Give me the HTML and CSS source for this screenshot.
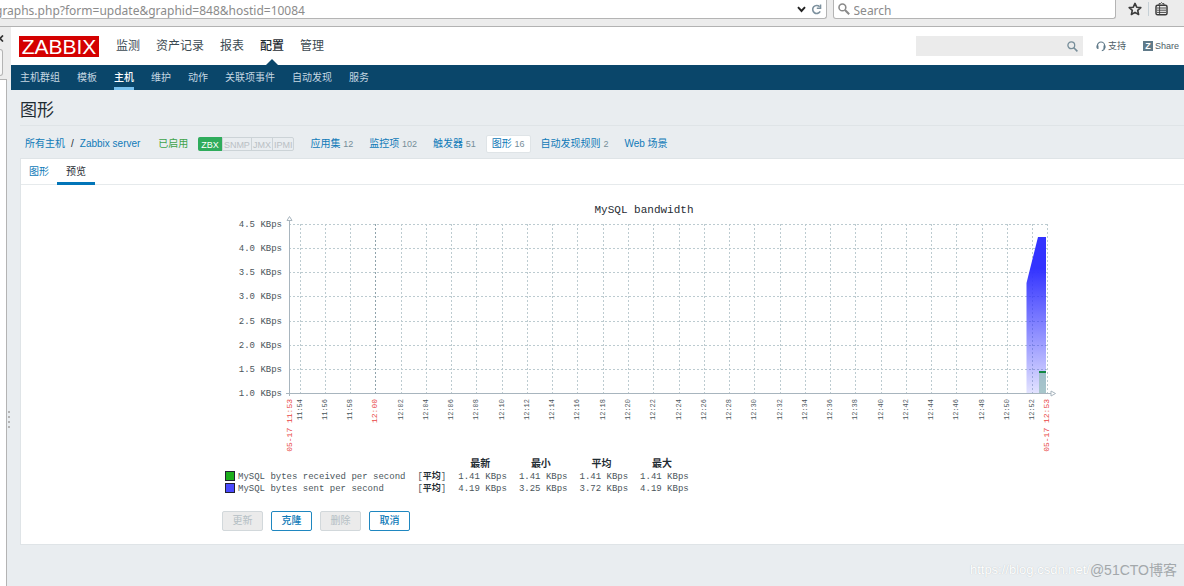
FILE: index.html
```html
<!DOCTYPE html>
<html lang="zh-CN">
<head>
<meta charset="utf-8">
<title>图形</title>
<link rel="stylesheet" href="styles.css">
</head>
<body>
<div class="toolbar">
  <div class="address">
    <span class="address-text">graphs.php?form=update&amp;graphid=848&amp;hostid=10084</span>
    <svg class="icon-chevron" width="9" height="7" viewBox="0 0 9 7"><path d="M1 1.2 4.5 5 8 1.2" fill="none" stroke="#222" stroke-width="1.9"/></svg>
    <svg width="11" height="11" viewBox="0 0 11 11"><path d="M8.6 2.7A4 4 0 1 0 9.2 7.4" fill="none" stroke="#7d919e" stroke-width="1.6"/><path d="M10.3.4V5H5.8V3.6h3V.4z" fill="#7d919e"/></svg>
  </div>
  <label class="browser-search">
    <svg width="12" height="12" viewBox="0 0 12 12"><circle cx="4.4" cy="4.4" r="3.4" fill="none" stroke="#8a8a8a" stroke-width="1.6"/><path d="m7 7 4.2 4.2" stroke="#8a8a8a" stroke-width="2"/></svg>
    <input type="text" placeholder="Search" aria-label="Search">
  </label>
  <div class="toolbar-icons">
    <svg width="14" height="14" viewBox="0 0 14 14"><path d="m7 1.4 1.7 3.8 4.1.4-3.1 2.8.9 4.1L7 10.4l-3.6 2.1.9-4.1-3.1-2.8 4.1-.4z" fill="none" stroke="#3b3b3b" stroke-width="1.6" stroke-linejoin="round"/></svg>
    <span class="divider"></span>
    <svg width="13" height="14" viewBox="0 0 13 14"><rect x="1" y="3.2" width="11" height="9.600" rx="1.6" fill="none" stroke="#3b3b3b" stroke-width="1.5"/><path d="M4 3V1.600h1.500L6.500.5l1 1.100H9V3M2 6h9M2 8.200h9M2 10.400h9M4.600 4v8" fill="none" stroke="#3b3b3b" stroke-width=".9"/></svg>
  </div>
</div>

<div class="shell">
  <aside class="rail">
    <svg class="rail-close" width="4" height="7" viewBox="0 0 4 7"><path d="M-3 .5 3 6.5M3 .5-3 6.5" stroke="#333" stroke-width="1.7"/></svg>
    <div class="rail-box"></div>
    <div class="rail-list"></div>
    <div class="rail-grip"></div>
  </aside>

  <div class="app">
    <header class="top">
      <a class="logo" href="#">ZABBIX</a>
      <nav class="menu">
        <a href="#">监测</a><a href="#">资产记录</a><a href="#">报表</a><a class="current" href="#">配置</a><a href="#">管理</a>
      </nav>
      <div class="search">
        <input type="text" aria-label="搜索">
        <svg width="11" height="11" viewBox="0 0 11 11"><circle cx="4.3" cy="4.3" r="3.4" fill="none" stroke="#768d99" stroke-width="1.3"/><path d="m6.8 6.8 3.6 3.6" stroke="#768d99" stroke-width="1.6"/></svg>
      </div>
      <a class="tool support" href="#">
        <svg width="10" height="11" viewBox="0 0 10 11"><path d="M1.4 6.5V4.6a3.6 3.6 0 0 1 7.2 0v1.9c0 2-1.2 3-2.8 3.2" fill="none" stroke="#607a89" stroke-width="1.1"/><path d="M.5 4.5h2V8h-1l-1-1zM9.500 4.500h-2V8h1l1-1z" fill="#607a89"/></svg>支持</a>
      <a class="tool share" href="#"><span class="share-mark">Z</span>Share</a>
    </header>

    <nav class="submenu">
      <a href="#">主机群组</a><a href="#">模板</a><a class="current" href="#">主机</a><a href="#">维护</a><a href="#">动作</a><a href="#">关联项事件</a><a href="#">自动发现</a><a href="#">服务</a>
    </nav>

    <main class="content">
      <h1>图形</h1>
      <div class="crumbs">
        <a href="#">所有主机</a><span class="slash">/</span><a href="#">Zabbix server</a>
        <span class="enabled">已启用</span>
        <span class="badges"><span class="on">ZBX</span><span>SNMP</span><span>JMX</span><span>IPMI</span></span>
        <nav class="objects">
          <a href="#">应用集 <sup>12</sup></a><a href="#">监控项 <sup>102</sup></a><a href="#">触发器 <sup>51</sup></a><a class="current" href="#">图形 <sup>16</sup></a><a href="#">自动发现规则 <sup>2</sup></a><a href="#">Web 场景</a>
        </nav>
      </div>

      <section class="panel">
        <div class="tabs"><a href="#">图形</a><a class="current" href="#">预览</a></div>
        <form class="preview">
          <svg class="chart" id="chart" viewBox="0 0 840 262" role="img" aria-label="MySQL bandwidth">
            <defs>
              <linearGradient id="sent" x1="0" y1="42" x2="0" y2="198" gradientUnits="userSpaceOnUse">
                <stop offset="0" stop-color="#3333ff"/><stop offset=".2" stop-color="#3333ff"/><stop offset="1" stop-color="#3333ff" stop-opacity=".14"/>
              </linearGradient>
            </defs>
            <text class="chart-title" x="422" y="18">MySQL bandwidth</text>
            <g id="grid"></g>
            <path d="M804.500 88 816 42h8v156h-19.500z" fill="url(#sent)"/>
            <path d="M817 177h7v21h-7z" fill="#8fbbb5" fill-opacity=".7"/>
            <path d="M817 176h7v2h-7z" fill="#118844"/>
            <path class="axis" d="M67.500 26v175M64 198.500h765"/>
            <path class="arrow" d="m67.500 21.500 2.500 4h-5zM829 196l4.500 2.500-4.500 2.500z"/>
            <g id="labels"></g>
          </svg>
          <table class="legend">
            <thead><tr><th></th><th></th><th>最新</th><th>最小</th><th>平均</th><th>最大</th></tr></thead>
            <tbody>
              <tr><td><span class="swatch received"></span>MySQL bytes received per second</td><td>[<b>平均</b>]</td><td>1.41 KBps</td><td>1.41 KBps</td><td>1.41 KBps</td><td>1.41 KBps</td></tr>
              <tr><td><span class="swatch sent"></span>MySQL bytes sent per second</td><td>[<b>平均</b>]</td><td>4.19 KBps</td><td>3.25 KBps</td><td>3.72 KBps</td><td>4.19 KBps</td></tr>
            </tbody>
          </table>
          <div class="actions">
            <button type="button" disabled>更新</button><button type="button">克隆</button><button type="button" disabled>删除</button><button type="button">取消</button>
          </div>
        </form>
      </section>
    </main>
  </div>
</div>
<div class="watermark"><span class="site">https://blog.csdn.net/</span><span class="owner">@51CTO博客</span></div>
<script src="chart.js"></script>
</body>
</html>
```
FILE: styles.css
```css
* { box-sizing: border-box; }
body {
  margin: 0;
  min-height: 100vh;
  display: flex;
  flex-direction: column;
  overflow: hidden;
  background: #e9edf0;
  color: #1f2c33;
  font: 10px/14px "Liberation Sans", "Noto Sans CJK SC", sans-serif;
}
a { color: #0f7ab8; text-decoration: none; }
svg { flex: none; }

/* Browser toolbar */
.toolbar {
  display: flex;
  align-items: flex-start;
  gap: 6px;
  height: 27px;
  background: #ececec;
  border-bottom: 1px solid #b2b2b2;
  font: 12px/18px "Noto Sans", sans-serif;
}
.address, .browser-search {
  display: flex;
  align-items: center;
  height: 19px;
  background: #fff;
  border: 1px solid #b4b4b4;
  border-top: 0;
  border-radius: 0 0 3px 3px;
}
.address { flex: 829 1 0; gap: 5px; padding-right: 4px; border-left: 0; }
.address-text { flex: 1; margin-left: -5px; padding-top: 3px; color: #8b8b8b; white-space: nowrap; }
.browser-search { flex: 280 1 0; gap: 4px; padding-left: 4px; }
.browser-search input { flex: 1; min-width: 0; border: 0; padding: 3px 0 0; height: 18px; background: none; font: inherit; }
.browser-search input::placeholder { color: #8b8b8b; opacity: 1; }
.toolbar-icons { display: flex; align-items: center; gap: 6px; padding: 2px 16px 0 6px; }
.divider { width: 1px; height: 14px; background: #c6d0d6; }

.shell { flex: 1; display: flex; }

/* Collapsed browser sidebar */
.rail { width: 11px; flex: none; display: flex; flex-direction: column; position: relative; background: linear-gradient(#ececec 54px, #e9edf0 54px); }
.rail-close { margin: 8px 0 7px; }
.rail-box { width: 3px; height: 27px; background: #f7f7f7; border: 1px solid #b4b4b4; border-left: 0; border-radius: 0 3px 3px 0; }
.rail-list { flex: 1; width: 7px; margin-top: 3px; background: #fff; border: 1px solid #b4b4b4; border-left: 0; border-bottom: 0; }
.rail-grip { position: absolute; left: 8px; top: 384px; width: 2px; height: 20px; background: repeating-linear-gradient(#b5b5b5 0 2px, transparent 2px 5px); }

/* Application header */
.app { flex: 1; min-width: 0; }
.top { display: flex; align-items: center; height: 38px; padding: 0 5px 0 8px; background: #fff; }
.logo { width: 80px; height: 21px; background: #d40000; color: #fff; font: 21px/22px "Liberation Sans", sans-serif; text-align: center; }
.menu { display: flex; gap: 16px; margin: 0 auto 0 17px; font-size: 12px; line-height: 40px; }
.menu a { color: #3c4a52; position: relative; }
.menu .current { color: #1f2c33; font-weight: 500; }
.menu .current::after {
  content: "";
  position: absolute;
  left: 6px;
  bottom: 1px;
  border: 6px solid transparent;
  border-top: 0;
  border-bottom-color: #0a466a;
}
.search { display: flex; align-items: center; width: 167px; height: 20px; padding-right: 5px; background: #ebebeb; }
.search input { flex: 1; min-width: 0; height: 20px; border: 0; background: none; }
.tool { display: flex; align-items: center; color: #4e5d66; font-size: 9px; }
.support { gap: 2px; margin: 0 17px 0 13px; }
.share { gap: 2px; }
.share-mark { width: 10px; background: #607a89; color: #fff; font-weight: bold; line-height: 10px; text-align: center; }

.submenu { display: flex; gap: 17px; height: 25px; padding-left: 9px; background: #0a466a; line-height: 26px; }
.submenu a { color: #c5d7e2; white-space: nowrap; }
.submenu .current { color: #fff; border-bottom: 3px solid #79c1ee; font-weight: 500; }

/* Page */
.content { padding-left: 9px; }
h1 { margin: 0; height: 36px; border-bottom: 1px solid #dfe4e7; font-size: 17px; font-weight: 400; line-height: 42px; }
.crumbs { display: flex; align-items: center; height: 32px; padding: 4px 0 0 5px; white-space: nowrap; }
.slash { margin: 0 6px; }
.enabled { margin: 0 10px 0 18px; color: #3da34a; }
.badges { display: flex; height: 14px; color: #b9c0c4; line-height: 14px; font-size: 9px; border: 1px solid #ccd3d7; border-radius: 2px; }
.badges span { padding: 0 1px; border-left: 1px solid #ccd3d7; }
.badges .on { margin: -1px 0 -1px -1px; padding: 1px 3px; border: 0; background: #2fac5c; color: #fff; border-radius: 2px 0 0 2px; }
.objects { display: flex; gap: 4px; margin-left: 10px; }
.objects a { padding: 1px 5px; border: 1px solid transparent; }
.objects .current { background: #fff; border-color: #dfe4e7; border-radius: 2px; }
.objects sup { color: #768d99; font-size: 9px; line-height: 14px; vertical-align: baseline; }

.panel { background: #fff; border: 1px solid #dfe4e7; border-right: 0; padding-bottom: 13px; }
.tabs { display: flex; height: 26px; border-bottom: 1px solid #e6eaec; line-height: 26px; }
.tabs a { padding: 0 8px; }
.tabs .current { height: 26px; border-bottom: 3px solid #0275b8; color: #1f2c33; padding: 0 9px; }
.preview { padding: 10px 0 0 201px; }

/* Graph */
.chart { display: block; width: 840px; max-width: 100%; font-family: "Liberation Mono", monospace; fill: #4b565c; }
.chart-title { font-size: 11px; text-anchor: middle; fill: #1f2c33; }
.grid-line { stroke: #bccbd0; stroke-dasharray: 2 2; fill: none; }
.grid-line.major { stroke: #8fa3ab; }
.axis { stroke: #a8b5be; fill: none; }
.arrow { stroke: #a8b5be; fill: #fff; }
.value { font-size: 9px; text-anchor: end; }
.time { font-size: 7px; text-anchor: end; }
.time.hour { font-size: 8px; fill: #e84444; }

.legend { border-collapse: collapse; margin-left: 3px; font: 9px/12px "Liberation Mono", "Noto Sans CJK SC", monospace; color: #4b565c; }
.legend th, .legend td { padding: 0 12px 0 0; height: 12px; text-align: left; font-weight: 400; white-space: nowrap; }
.legend th { padding: 2px 0 0 12px; color: #1f2c33; font-size: 10px; font-weight: 700; }
.legend td:first-child { width: 188px; }
.legend td:nth-child(2) { width: 40px; }
.legend b { color: #1f2c33; }
.swatch { display: inline-block; width: 10px; height: 10px; margin-right: 3px; border: 1px solid #223; vertical-align: -2px; }
.received { background: #1cae1c; }
.sent { background: #4a4aff; }

.actions { display: flex; gap: 8px; margin-top: 16px; }
button { width: 41px; height: 20px; padding: 0; border: 1px solid #1f87c0; border-radius: 2px; background: #fff; color: #0f7ab8; font: inherit; font-weight: 500; }
button:disabled { border-color: #d2d8db; background: #ebebeb; color: #b4bfc4; font-weight: 400; }

.watermark { position: absolute; right: 7px; bottom: 6px; display: flex; font-size: 14px; line-height: 20px; }
.site { color: #fff; font-size: 13px; text-shadow: 0 0 1px #b0b7bb; }
.owner { color: #a3a8ab; }
```
FILE: chart.js
```js
const NS = "http://www.w3.org/2000/svg";
const grid = document.getElementById("grid");
const labels = document.getElementById("labels");
const LEFT = 67, RIGHT = 825, TOP = 29, BOTTOM = 198;

function add(parent, tag, attrs, text) {
  const node = document.createElementNS(NS, tag);
  for (const key in attrs) node.setAttribute(key, attrs[key]);
  if (text) node.textContent = text;
  parent.appendChild(node);
}

function timeLabel(x, text, cls) {
  add(labels, "text", { class: cls, transform: `translate(${x} 204) rotate(-90)` }, text);
}

for (let i = 0; i <= 7; i++) {
  const y = Math.round(TOP + (BOTTOM - TOP) * i / 7);
  if (i < 7) add(grid, "path", { class: "grid-line", d: `M${LEFT} ${y + 0.5}H${RIGHT}` });
  add(labels, "text", { class: "value", x: 60, y: y + 3 }, (4.5 - i * 0.5).toFixed(1) + " KBps");
}

for (let i = 0; i < 30; i++) {
  const minute = 54 + i * 2;
  const x = Math.round(78.6 + i * 25.26);
  const major = minute === 60;
  const time = (11 + Math.floor(minute / 60)) + ":" + String(minute % 60).padStart(2, "0");
  add(grid, "path", { class: major ? "grid-line major" : "grid-line", d: `M${x - 0.5} ${TOP}V${BOTTOM}` });
  timeLabel(x + 1, time, major ? "time hour" : "time");
}
add(grid, "path", { class: "grid-line", d: `M${RIGHT + 0.5} ${TOP}V${BOTTOM}` });
timeLabel(LEFT + 3, "05-17 11:53", "time hour");
timeLabel(RIGHT + 2, "05-17 12:53", "time hour");
```
